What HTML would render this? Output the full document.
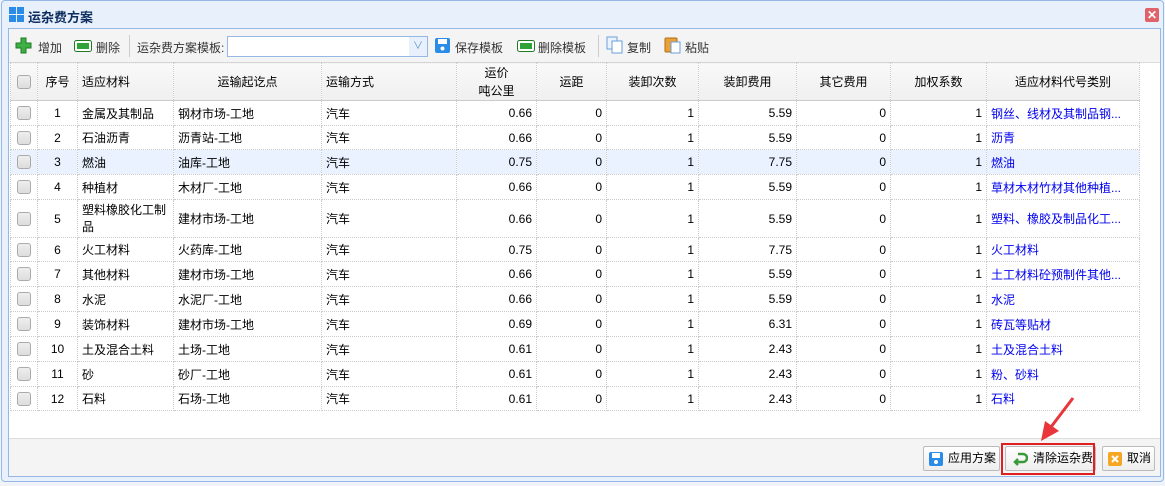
<!DOCTYPE html>
<html><head><meta charset="utf-8"><style>
*{box-sizing:border-box;margin:0;padding:0}
body{width:1165px;height:486px;overflow:hidden;background:#f0f4fa;font-family:"Liberation Sans","Noto Sans CJK SC",sans-serif;font-size:12px;color:#000;position:relative}
.win{position:absolute;left:1px;top:0;width:1163px;height:482px;background:#e7f0fb;border:1px solid #95b8e7;border-radius:4px}
.title{position:absolute;left:26px;top:6px;font-size:13px;font-weight:bold;color:#0e2d5f}
.ticon{position:absolute;left:7px;top:6px;width:16px;height:16px}
.close{position:absolute;left:1143px;top:7px;width:14px;height:14px;background:#e0636a;border-radius:2px;color:#fff;font-size:12px;line-height:14px;text-align:center;font-weight:bold}
.panel{position:absolute;left:6px;top:27px;width:1153px;height:449px;background:#fff;border:1px solid #95b8e7}
.tb{position:absolute;left:0;top:0;width:1151px;height:34px;background:#f4f4f4;border-bottom:1px solid #ddd}
.tb span{position:absolute;top:10px;font-size:12px;color:#333}
.sep{position:absolute;top:6px;width:1px;height:22px;background:#ccc}
table{position:absolute;left:1px;top:33px;border-collapse:collapse;table-layout:fixed}
td{border:1px dotted #ccc;padding:0 4px;white-space:nowrap;overflow:hidden;color:#000}
thead td{background:linear-gradient(#f9f9f9,#efefef);height:38px;text-align:center;color:#000;border-bottom:1px solid #ccc}
td.r{text-align:right}td.c{text-align:center}
td.b{color:#0000ee}
.cb{display:inline-block;width:14px;height:14px;border:1px solid #aaa;border-radius:3px;background:linear-gradient(#eee,#ddd);vertical-align:middle}
tr.s td{background:#eaf2ff}
.foot{position:absolute;left:0;top:409px;width:1151px;height:38px;background:#f4f4f4;border-top:1px solid #ddd}
.btn{position:absolute;top:7px;height:25px;border:1px solid #bbb;border-radius:2px;background:linear-gradient(#fff,#eee);font-size:12px;line-height:23px;padding-left:24px;color:#000}
</style></head><body>
<div class="win">
<svg class="ticon" viewBox="0 0 16 16"><rect x="0" y="0" width="7" height="7" fill="#2a8ce6"/><rect x="8" y="0" width="7" height="7" fill="#2a8ce6"/><rect x="0" y="8" width="7" height="7" fill="#2a8ce6"/><rect x="8" y="8" width="7" height="7" fill="#2a8ce6"/></svg>
<div class="title">运杂费方案</div>
<div class="close">✕</div>
<div class="panel">
<div class="tb">
<svg style="position:absolute;left:6px;top:8px" width="17" height="17" viewBox="0 0 17 17"><path d="M6 1h5v5h5v5h-5v5H6v-5H1V6h5z" fill="#3cb043" stroke="#1f7a25"/></svg>
<span style="left:29px">增加</span>
<svg style="position:absolute;left:65px;top:11px" width="18" height="12"><rect x="0.5" y="0.5" width="17" height="11" rx="2" fill="#fff" stroke="#1f7a25"/><rect x="3" y="3" width="12" height="6" fill="#2fa23a"/></svg>
<span style="left:87px">删除</span>
<div class="sep" style="left:120px"></div>
<span style="left:128px">运杂费方案模板:</span>
<div style="position:absolute;left:218px;top:7px;width:201px;height:21px;border:1px solid #95b8e7;background:#fff"><div style="position:absolute;right:0;top:0;width:18px;height:19px;background:#e8f1fb;color:#5a8fd0;font-size:10px;text-align:center;line-height:19px">∨</div></div>
<svg style="position:absolute;left:426px;top:9px" width="15" height="15"><rect width="15" height="15" rx="2" fill="#2a8ce6"/><rect x="3" y="1" width="9" height="5" fill="#fff"/><circle cx="7.5" cy="10.5" r="2" fill="#fff"/></svg>
<span style="left:446px">保存模板</span>
<svg style="position:absolute;left:508px;top:11px" width="18" height="12"><rect x="0.5" y="0.5" width="17" height="11" rx="2" fill="#fff" stroke="#1f7a25"/><rect x="3" y="3" width="12" height="6" fill="#2fa23a"/></svg>
<span style="left:529px">删除模板</span>
<div class="sep" style="left:589px"></div>
<svg style="position:absolute;left:597px;top:7px" width="18" height="18"><rect x="1" y="1" width="10" height="12" fill="#eaf3ff" stroke="#6a9fd8"/><rect x="6" y="5" width="10" height="12" fill="#fff" stroke="#6a9fd8"/></svg>
<span style="left:618px">复制</span>
<svg style="position:absolute;left:655px;top:7px" width="18" height="18"><rect x="1" y="2" width="12" height="14" rx="1" fill="#e9a23b" stroke="#b06d10"/><rect x="7" y="6" width="9" height="11" fill="#fff" stroke="#6a9fd8"/></svg>
<span style="left:676px">粘贴</span>
</div>
<table>
<colgroup><col style="width:27px"><col style="width:40px"><col style="width:96px"><col style="width:148px"><col style="width:135px"><col style="width:80px"><col style="width:70px"><col style="width:92px"><col style="width:98px"><col style="width:94px"><col style="width:96px"><col style="width:153px"></colgroup>
<thead><tr><td class="c"><span class="cb"></span></td><td>序号</td><td style="text-align:left">适应材料</td><td>运输起讫点</td><td style="text-align:left">运输方式</td><td style="line-height:18px">运价<br>吨公里</td><td>运距</td><td>装卸次数</td><td>装卸费用</td><td>其它费用</td><td>加权系数</td><td>适应材料代号类别</td></tr></thead>
<tbody>
<tr style="height:25px"><td class="c"><span class="cb"></span></td><td class="c">1</td><td>金属及其制品</td><td>钢材市场-工地</td><td>汽车</td><td class="r">0.66</td><td class="r">0</td><td class="r">1</td><td class="r">5.59</td><td class="r">0</td><td class="r">1</td><td class="b">钢丝、线材及其制品钢...</td></tr>
<tr style="height:24px"><td class="c"><span class="cb"></span></td><td class="c">2</td><td>石油沥青</td><td>沥青站-工地</td><td>汽车</td><td class="r">0.66</td><td class="r">0</td><td class="r">1</td><td class="r">5.59</td><td class="r">0</td><td class="r">1</td><td class="b">沥青</td></tr>
<tr class="s" style="height:25px"><td class="c"><span class="cb"></span></td><td class="c">3</td><td>燃油</td><td>油库-工地</td><td>汽车</td><td class="r">0.75</td><td class="r">0</td><td class="r">1</td><td class="r">7.75</td><td class="r">0</td><td class="r">1</td><td class="b">燃油</td></tr>
<tr style="height:25px"><td class="c"><span class="cb"></span></td><td class="c">4</td><td>种植材</td><td>木材厂-工地</td><td>汽车</td><td class="r">0.66</td><td class="r">0</td><td class="r">1</td><td class="r">5.59</td><td class="r">0</td><td class="r">1</td><td class="b">草材木材竹材其他种植...</td></tr>
<tr style="height:38px"><td class="c"><span class="cb"></span></td><td class="c">5</td><td style="white-space:normal;line-height:17px">塑料橡胶化工制品</td><td>建材市场-工地</td><td>汽车</td><td class="r">0.66</td><td class="r">0</td><td class="r">1</td><td class="r">5.59</td><td class="r">0</td><td class="r">1</td><td class="b">塑料、橡胶及制品化工...</td></tr>
<tr style="height:24px"><td class="c"><span class="cb"></span></td><td class="c">6</td><td>火工材料</td><td>火药库-工地</td><td>汽车</td><td class="r">0.75</td><td class="r">0</td><td class="r">1</td><td class="r">7.75</td><td class="r">0</td><td class="r">1</td><td class="b">火工材料</td></tr>
<tr style="height:25px"><td class="c"><span class="cb"></span></td><td class="c">7</td><td>其他材料</td><td>建材市场-工地</td><td>汽车</td><td class="r">0.66</td><td class="r">0</td><td class="r">1</td><td class="r">5.59</td><td class="r">0</td><td class="r">1</td><td class="b">土工材料砼预制件其他...</td></tr>
<tr style="height:25px"><td class="c"><span class="cb"></span></td><td class="c">8</td><td>水泥</td><td>水泥厂-工地</td><td>汽车</td><td class="r">0.66</td><td class="r">0</td><td class="r">1</td><td class="r">5.59</td><td class="r">0</td><td class="r">1</td><td class="b">水泥</td></tr>
<tr style="height:25px"><td class="c"><span class="cb"></span></td><td class="c">9</td><td>装饰材料</td><td>建材市场-工地</td><td>汽车</td><td class="r">0.69</td><td class="r">0</td><td class="r">1</td><td class="r">6.31</td><td class="r">0</td><td class="r">1</td><td class="b">砖瓦等贴材</td></tr>
<tr style="height:25px"><td class="c"><span class="cb"></span></td><td class="c">10</td><td>土及混合土料</td><td>土场-工地</td><td>汽车</td><td class="r">0.61</td><td class="r">0</td><td class="r">1</td><td class="r">2.43</td><td class="r">0</td><td class="r">1</td><td class="b">土及混合土料</td></tr>
<tr style="height:25px"><td class="c"><span class="cb"></span></td><td class="c">11</td><td>砂</td><td>砂厂-工地</td><td>汽车</td><td class="r">0.61</td><td class="r">0</td><td class="r">1</td><td class="r">2.43</td><td class="r">0</td><td class="r">1</td><td class="b">粉、砂料</td></tr>
<tr style="height:24px"><td class="c"><span class="cb"></span></td><td class="c">12</td><td>石料</td><td>石场-工地</td><td>汽车</td><td class="r">0.61</td><td class="r">0</td><td class="r">1</td><td class="r">2.43</td><td class="r">0</td><td class="r">1</td><td class="b">石料</td></tr>
</tbody></table>
<div class="foot">
<div class="btn" style="left:914px;width:77px"><svg style="position:absolute;left:5px;top:5px" width="14" height="14"><rect width="14" height="14" rx="2" fill="#2a8ce6"/><rect x="3" y="1" width="8" height="5" fill="#fff"/><circle cx="7" cy="10" r="2" fill="#fff"/></svg>应用方案</div>
<div class="btn" style="left:996px;width:91px;padding-left:27px"><svg style="position:absolute;left:6px;top:5px" width="16" height="14"><path d="M6 2h5a4 4 0 0 1 0 8H3M6 7l-3 3 3 3" fill="none" stroke="#3a9a3a" stroke-width="2.5"/></svg>清除运杂费</div>
<div style="position:absolute;left:992px;top:4px;width:94px;height:32px;border:2px solid #e02020"></div>
<div class="btn" style="left:1093px;width:53px"><svg style="position:absolute;left:5px;top:5px" width="14" height="14"><rect width="14" height="14" rx="2" fill="#f5a623"/><path d="M4 4l6 6M10 4l-6 6" stroke="#fff" stroke-width="2"/></svg>取消</div>
</div>
</div>
</div>
<svg style="position:absolute;left:1035px;top:395px" width="42" height="50"><path d="M38 3L16 32" stroke="#e8363b" stroke-width="3"/><path d="M6 46L10 26 24 36z" fill="#e8363b"/></svg>
</body></html>
